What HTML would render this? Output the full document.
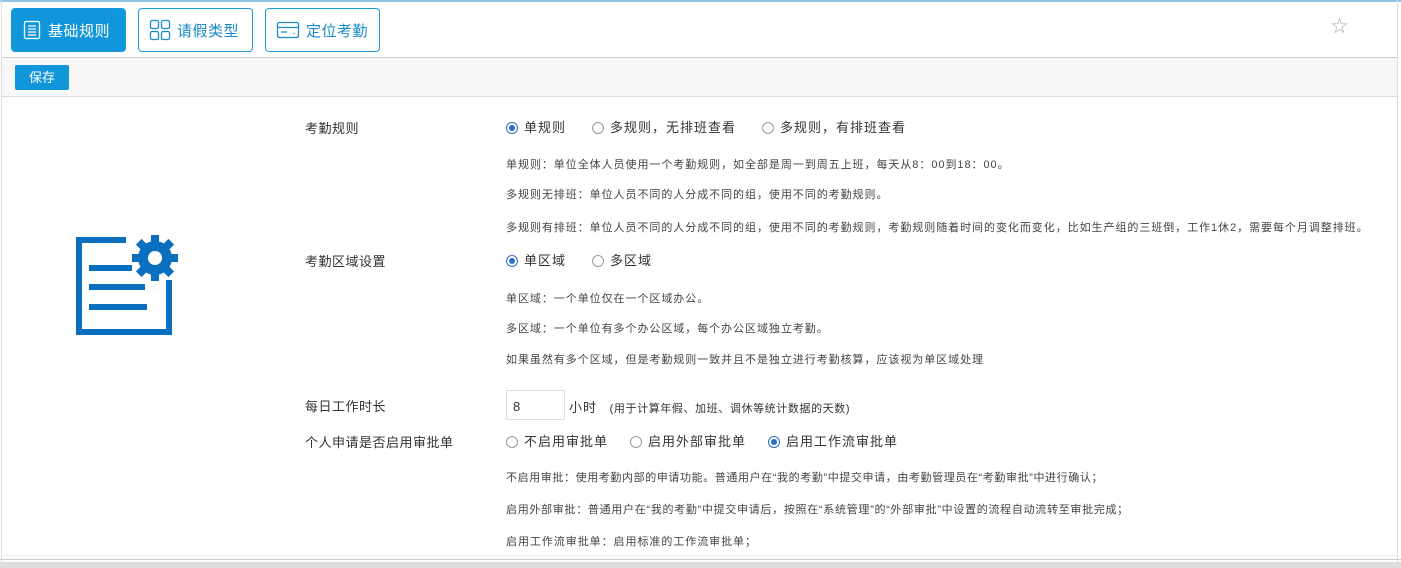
<!DOCTYPE html>
<html><head><meta charset="utf-8"><style>
*{margin:0;padding:0;box-sizing:border-box}
body{width:1401px;height:568px;background:#fff;font-family:"Liberation Sans","Noto Sans CJK SC",sans-serif;color:#333;position:relative;overflow:hidden}
.a{position:absolute;white-space:nowrap}
.btn{position:absolute;top:8px;height:44px;width:115px;border:1px solid #1a9bd7;border-radius:4px;color:#1a8ac8;font-size:15px;display:flex;align-items:center;padding-left:10px;gap:6px;letter-spacing:0.5px}
.btn.on{background:#1296db;color:#fff}
.lbl{font-size:13px;color:#333;letter-spacing:0.5px}
.d{font-size:11px;color:#444;letter-spacing:0.95px}
.r{display:inline-block;width:12px;height:12px;border:1px solid #999;border-radius:50%;vertical-align:-2px;margin-right:6px;position:relative}
.r.c{border-color:#2a6fc9}
.r.c::after{content:"";position:absolute;left:2px;top:2px;width:6px;height:6px;border-radius:50%;background:#2a6fc9}
.opt{font-size:13px;color:#333;letter-spacing:1px}
</style></head><body>
<div class="a" style="left:0;top:0;width:1401px;height:2px;background:#8fc3e6"></div>
<div class="a" style="left:1px;top:0;width:1px;height:562px;background:#ddd"></div>
<div class="a" style="left:1397px;top:0;width:1px;height:562px;background:#ddd"></div>
<div class="btn on" style="left:11px"><svg width="20" height="20" viewBox="0 0 20 20" fill="none" stroke="#fff" stroke-width="1.3"><rect x="2.5" y="1.5" width="15" height="17" rx="1.5"/><path d="M6 6h8M6 9h8M6 12h8M6 15h8"/></svg>基础规则</div>
<div class="btn" style="left:138px"><svg width="22" height="22" viewBox="0 0 22 22" fill="none" stroke="#1a8ac8" stroke-width="1.3"><rect x="1.5" y="1.5" width="8" height="8" rx="1.5"/><rect x="12.5" y="1.5" width="8" height="8" rx="1.5"/><rect x="1.5" y="12.5" width="8" height="8" rx="1.5"/><rect x="12.5" y="12.5" width="8" height="8" rx="1.5"/></svg>请假类型</div>
<div class="btn" style="left:265px"><svg width="24" height="20" viewBox="0 0 24 20" fill="none" stroke="#1a8ac8" stroke-width="1.3"><rect x="1.5" y="2.5" width="21" height="15" rx="2"/><path d="M1.5 7.5h21M5 12h6M18 13v1"/></svg>定位考勤</div>
<div class="a" style="left:1331px;top:12px;color:#aab;font-size:17px">☆</div>
<div class="a" style="left:2px;top:57px;width:1395px;height:40px;background:#f7f7f7;border-top:1px solid #ccc;border-bottom:1px solid #ddd"></div>
<div class="a" style="left:15px;top:65px;width:54px;height:25px;background:#1296db;border-radius:2px;color:#fff;font-size:13px;text-align:center;line-height:25px">保存</div>
<svg class="a" style="left:72px;top:232px" width="110" height="104" viewBox="0 0 110 104">
<path d="M54 8H7v92h90V48" fill="none" stroke="#0a6fbf" stroke-width="6"/>
<path d="M17 36h43M17 55h56M17 75h58" stroke="#0a6fbf" stroke-width="6"/>
<g transform="translate(83 26)" fill="#0a6fbf"><circle r="17"/>
<rect x="-4" y="-23" width="8" height="10"/>
<rect x="-4" y="-23" width="8" height="10" transform="rotate(45)"/><rect x="-4" y="-23" width="8" height="10" transform="rotate(90)"/><rect x="-4" y="-23" width="8" height="10" transform="rotate(135)"/><rect x="-4" y="-23" width="8" height="10" transform="rotate(180)"/><rect x="-4" y="-23" width="8" height="10" transform="rotate(225)"/><rect x="-4" y="-23" width="8" height="10" transform="rotate(270)"/><rect x="-4" y="-23" width="8" height="10" transform="rotate(315)"/>
<circle r="7" fill="#fff"/></g></svg>
<div class="a lbl" style="left:305px;top:118px">考勤规则</div>
<div class="a opt" style="left:506px;top:117px"><span class="r c"></span>单规则<span style="display:inline-block;width:26px"></span><span class="r"></span>多规则，无排班查看<span style="display:inline-block;width:26px"></span><span class="r"></span>多规则，有排班查看</div>
<div class="a d" style="left:506px;top:156px">单规则：单位全体人员使用一个考勤规则，如全部是周一到周五上班，每天从8：00到18：00。</div>
<div class="a d" style="left:506px;top:186px">多规则无排班：单位人员不同的人分成不同的组，使用不同的考勤规则。</div>
<div class="a d" style="left:506px;top:219px">多规则有排班：单位人员不同的人分成不同的组，使用不同的考勤规则，考勤规则随着时间的变化而变化，比如生产组的三班倒，工作1休2，需要每个月调整排班。</div>
<div class="a lbl" style="left:305px;top:251px">考勤区域设置</div>
<div class="a opt" style="left:506px;top:250px"><span class="r c"></span>单区域<span style="display:inline-block;width:26px"></span><span class="r"></span>多区域</div>
<div class="a d" style="left:506px;top:290px">单区域：一个单位仅在一个区域办公。</div>
<div class="a d" style="left:506px;top:320px">多区域：一个单位有多个办公区域，每个办公区域独立考勤。</div>
<div class="a d" style="left:506px;top:351px">如果虽然有多个区域，但是考勤规则一致并且不是独立进行考勤核算，应该视为单区域处理</div>
<div class="a lbl" style="left:305px;top:396px">每日工作时长</div>
<div class="a" style="left:506px;top:390px;width:59px;height:30px;border:1px solid #ddd;font-size:13px;padding:8px 0 0 6px">8</div>
<div class="a opt" style="left:569px;top:397px">小时 <span style="font-size:11px;margin-left:8px;letter-spacing:0.6px">(用于计算年假、加班、调休等统计数据的天数)</span></div>
<div class="a lbl" style="left:305px;top:432px">个人申请是否启用审批单</div>
<div class="a opt" style="left:506px;top:431px"><span class="r"></span>不启用审批单<span style="display:inline-block;width:22px"></span><span class="r"></span>启用外部审批单<span style="display:inline-block;width:22px"></span><span class="r c"></span>启用工作流审批单</div>
<div class="a d" style="left:506px;top:469px;letter-spacing:0.6px">不启用审批：使用考勤内部的申请功能。普通用户在“我的考勤”中提交申请，由考勤管理员在“考勤审批”中进行确认；</div>
<div class="a d" style="left:506px;top:501px;letter-spacing:0.7px">启用外部审批：普通用户在“我的考勤”中提交申请后，按照在“系统管理”的“外部审批”中设置的流程自动流转至审批完成；</div>
<div class="a d" style="left:506px;top:533px">启用工作流审批单：启用标准的工作流审批单；</div>
<div class="a" style="left:2px;top:555px;width:1395px;height:1px;background:#eee"></div>
<div class="a" style="left:0;top:559px;width:1401px;height:1px;background:#ccc"></div>
<div class="a" style="left:0;top:562px;width:1401px;height:6px;background:#ddd"></div>
</body></html>
